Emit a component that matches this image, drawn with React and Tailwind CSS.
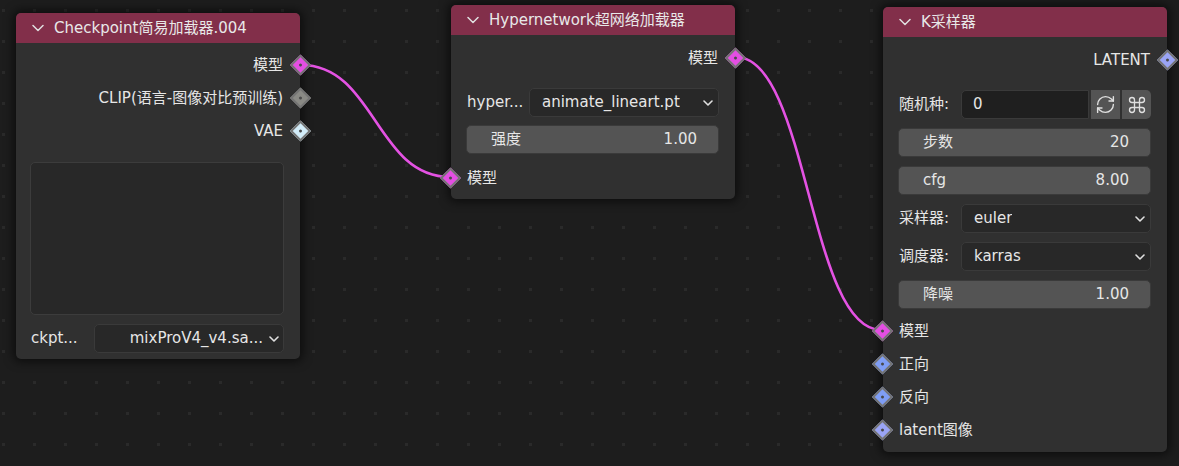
import React from "react";
import { RefreshCw, Command } from "lucide-react";

function Chevron() {
  return (
    <svg width="12" height="8" viewBox="0 0 12 8" className="shrink-0">
      <polyline points="1,1.5 6,6.5 11,1.5" fill="none" stroke="#e0e0e0" strokeWidth="1.5" strokeLinecap="round" strokeLinejoin="round" />
    </svg>
  );
}

function SmallChevron() {
  return (
    <svg width="10" height="6" viewBox="0 0 10 6" className="shrink-0">
      <polyline points="1,1 5,5 9,1" fill="none" stroke="#e0e0e0" strokeWidth="1.6" strokeLinecap="round" strokeLinejoin="round" />
    </svg>
  );
}

function Socket({ side, fill }) {
  const pos = side === "right" ? "right-[-8px]" : "left-[-8px]";
  return (
    <div className={`absolute top-1/2 ${pos} w-[15px] h-[15px] -translate-y-1/2 rotate-45 border-2 border-[#747474] ${fill} flex items-center justify-center z-10`}>
      <div className="w-[3px] h-[3px] rounded-full bg-[#4a4a4a]" />
    </div>
  );
}

function Header({ title }) {
  return (
    <div className="h-[30px] flex items-center bg-[#822f4a] rounded-t-[5px] pl-[16px]">
      <Chevron />
      <span className="ml-[10px] text-[#e8e8e8] whitespace-nowrap">{title}</span>
    </div>
  );
}

function OutRow({ label, fill }) {
  return (
    <div className="relative h-[33px] flex items-center justify-end pr-[17px]">
      <span className="whitespace-nowrap pt-[2px]">{label}</span>
      <Socket side="right" fill={fill} />
    </div>
  );
}

function InRow({ label, fill }) {
  return (
    <div className="relative h-[33px] flex items-center pl-[16px]">
      <Socket side="left" fill={fill} />
      <span className="whitespace-nowrap pt-[2px]">{label}</span>
    </div>
  );
}

function Slider({ label, value }) {
  return (
    <div className="h-[29px] ml-[15px] mr-[16px] rounded-[5px] bg-[#545454] border border-[#3a3a3a] flex items-center justify-between pl-[24px] pr-[21px]">
      <span>{label}</span>
      <span>{value}</span>
    </div>
  );
}

function Dropdown({ text, align }) {
  const j = align === "end" ? "justify-end gap-[6px] pr-[4px]" : "justify-between pl-[12px] pr-[5px]";
  return (
    <div className={`flex-1 min-w-0 h-[29px] rounded-[5px] bg-[#282828] border border-[#3a3a3a] flex items-center ${j}`}>
      <span className="whitespace-nowrap overflow-hidden">{text}</span>
      <SmallChevron />
    </div>
  );
}

function LabelRow({ label, children }) {
  return (
    <div className="h-[29px] flex items-center pl-[16px] pr-[16px]">
      <span className="w-[62px] shrink-0 whitespace-nowrap">{label}</span>
      {children}
    </div>
  );
}

export default function App() {
  return (
    <div className="relative w-[1179px] h-[466px] overflow-hidden bg-[#1d1d1d] font-['DejaVu_Sans','Noto_Sans_CJK_SC',sans-serif] text-[15px] text-[#e6e6e6]">
      <svg className="absolute inset-0" width="1179" height="466">
        <defs>
          <pattern id="dots" x="2" y="9" width="31" height="31" patternUnits="userSpaceOnUse">
            <rect x="0" y="0" width="3" height="3" fill="#2a2a2a" />
          </pattern>
        </defs>
        <rect width="1179" height="466" fill="url(#dots)" />
        <path d="M301 65 C 375 65, 376 177, 450 177" fill="none" stroke="#e452e3" strokeWidth="2.6" />
        <path d="M736 57 C 808 57, 809 330, 881 330" fill="none" stroke="#e452e3" strokeWidth="2.6" />
      </svg>

      {/* Node 1 */}
      <div className="absolute left-[16px] top-[13px] w-[284px] rounded-[5px] bg-[#303030] shadow-[0_0_10px_3px_rgba(0,0,0,0.55)]">
        <Header title="Checkpoint简易加载器.004" />
        <div className="pt-[5px] pb-[6px] flex flex-col">
          <OutRow label="模型" fill="bg-[#e44ee3]" />
          <OutRow label="CLIP(语言-图像对比预训练)" fill="bg-[#8a8a85]" />
          <OutRow label="VAE" fill="bg-[#d2ecf8]" />
          <div className="mt-[15px] ml-[14px] mr-[16px] h-[153px] rounded-[5px] bg-[#282828] border border-[#3c3c3c]" />
          <div className="mt-[9px] h-[29px] flex items-center pl-[15px] pr-[16px]">
            <span className="w-[63px] shrink-0 whitespace-nowrap">ckpt...</span>
            <Dropdown text="mixProV4_v4.sa..." align="end" />
          </div>
        </div>
      </div>

      {/* Node 2 */}
      <div className="absolute left-[451px] top-[5px] w-[284px] rounded-[5px] bg-[#303030] shadow-[0_0_10px_3px_rgba(0,0,0,0.55)]">
        <Header title="Hypernetwork超网络加载器" />
        <div className="pt-[6px] pb-[5px] flex flex-col">
          <OutRow label="模型" fill="bg-[#e44ee3]" />
          <div className="mt-[14px]">
            <LabelRow label="hyper...">
              <Dropdown text="animate_lineart.pt" />
            </LabelRow>
          </div>
          <div className="mt-[8px]">
            <Slider label="强度" value="1.00" />
          </div>
          <div className="mt-[7px]">
            <InRow label="模型" fill="bg-[#e44ee3]" />
          </div>
        </div>
      </div>

      {/* Node 3 */}
      <div className="absolute left-[883px] top-[7px] w-[284px] rounded-[5px] bg-[#303030] shadow-[0_0_10px_3px_rgba(0,0,0,0.55)]">
        <Header title="K采样器" />
        <div className="pt-[6px] pb-[6px] flex flex-col">
          <OutRow label="LATENT" fill="bg-[#9aa4f6]" />
          <div className="mt-[14px] flex flex-col gap-[9px]">
            <LabelRow label="随机种:">
              <div className="flex-1 h-[29px] flex items-stretch gap-[2px]">
                <div className="flex-1 rounded-l-[5px] bg-[#1f1f1f] border border-[#3a3a3a] flex items-center pl-[11px]">0</div>
                <div className="w-[29px] bg-[#545454] flex items-center justify-center">
                  <RefreshCw size={21} strokeWidth={1.6} color="#e0e0e0" />
                </div>
                <div className="w-[29px] rounded-r-[5px] bg-[#545454] flex items-center justify-center">
                  <Command size={20} strokeWidth={1.6} color="#e0e0e0" />
                </div>
              </div>
            </LabelRow>
            <Slider label="步数" value="20" />
            <Slider label="cfg" value="8.00" />
            <LabelRow label="采样器:">
              <Dropdown text="euler" />
            </LabelRow>
            <LabelRow label="调度器:">
              <Dropdown text="karras" />
            </LabelRow>
            <Slider label="降噪" value="1.00" />
          </div>
          <div className="mt-[5px] flex flex-col">
            <InRow label="模型" fill="bg-[#e44ee3]" />
            <InRow label="正向" fill="bg-[#7f9ef6]" />
            <InRow label="反向" fill="bg-[#7f9ef6]" />
            <InRow label="latent图像" fill="bg-[#9aa4f6]" />
          </div>
        </div>
      </div>
    </div>
  );
}
